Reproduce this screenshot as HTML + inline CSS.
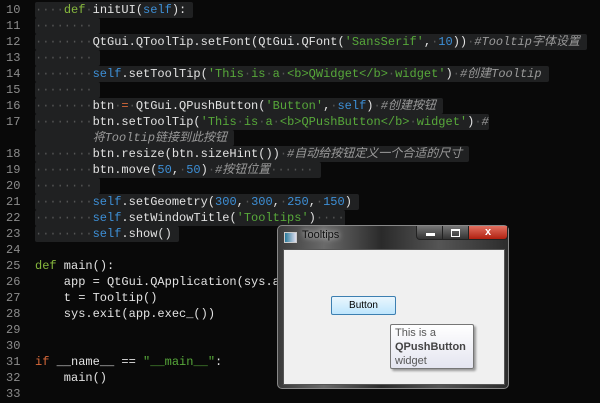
<!DOCTYPE html>
<html><head><meta charset="utf-8"><style>
body{margin:0;width:600px;height:403px;background:#090909;overflow:hidden;position:relative;font-family:"Liberation Mono","Noto Sans CJK SC",monospace;font-size:12px;color:#e2e2e2}
.ln{position:absolute;left:6px;width:26px;color:#8c8c8c;height:16px;line-height:16px}
.l{position:absolute;left:35px;height:16px;line-height:16px;white-space:pre}
.b{background:#202122;border-radius:2px}
.d{color:#555}
.k{color:#86b83d}.s{color:#3d8fd6}.g{color:#57a83a}.c{color:#9a9a9a;font-style:italic}.o{color:#d8693a}
.win{position:absolute;left:277px;top:225px;width:232px;height:164px;border-radius:5px;background:linear-gradient(90deg,#3a3a3a,#6a6a6a 20%,#2a2a2a 45%,#555 70%,#2c2c2c);border:1px solid #888;box-sizing:border-box}
</style></head><body>
<div class="ln" style="top:2px">10</div><div class="ln" style="top:18px">11</div><div class="ln" style="top:34px">12</div><div class="ln" style="top:50px">13</div><div class="ln" style="top:66px">14</div><div class="ln" style="top:82px">15</div><div class="ln" style="top:98px">16</div><div class="ln" style="top:114px">17</div><div class="ln" style="top:146px">18</div><div class="ln" style="top:162px">19</div><div class="ln" style="top:178px">20</div><div class="ln" style="top:194px">21</div><div class="ln" style="top:210px">22</div><div class="ln" style="top:226px">23</div><div class="ln" style="top:242px">24</div><div class="ln" style="top:258px">25</div><div class="ln" style="top:274px">26</div><div class="ln" style="top:290px">27</div><div class="ln" style="top:306px">28</div><div class="ln" style="top:322px">29</div><div class="ln" style="top:338px">30</div><div class="ln" style="top:354px">31</div><div class="ln" style="top:370px">32</div><div class="ln" style="top:386px">33</div>

<div class="l b" style="top:2px"><span class="d">····</span><span class="k">def</span><span class="d">·</span>initUI(<span class="s">self</span>): </div>
<div class="l b" style="top:18px"><span class="d">········</span> </div>
<div class="l b" style="top:34px"><span class="d">········</span>QtGui.QToolTip.setFont(QtGui.QFont(<span class="g">'SansSerif'</span>,<span class="d">·</span><span class="s">10</span>))<span class="d">·</span><span class="c">#Tooltip字体设置</span> </div>
<div class="l b" style="top:50px"><span class="d">········</span> </div>
<div class="l b" style="top:66px"><span class="d">········</span><span class="s">self</span>.setToolTip(<span class="g">'This<span class="d">·</span>is<span class="d">·</span>a<span class="d">·</span>&lt;b&gt;QWidget&lt;/b&gt;<span class="d">·</span>widget'</span>)<span class="d">·</span><span class="c">#创建Tooltip</span> </div>
<div class="l b" style="top:82px"><span class="d">········</span> </div>
<div class="l b" style="top:98px"><span class="d">········</span>btn<span class="d">·</span><span class="o">=</span><span class="d">·</span>QtGui.QPushButton(<span class="g">'Button'</span>,<span class="d">·</span><span class="s">self</span>)<span class="d">·</span><span class="c">#创建按钮</span> </div>
<div class="l b" style="top:114px"><span class="d">········</span>btn.setToolTip(<span class="g">'This<span class="d">·</span>is<span class="d">·</span>a<span class="d">·</span>&lt;b&gt;QPushButton&lt;/b&gt;<span class="d">·</span>widget'</span>)<span class="d">·</span><span class="c">#</span></div>
<div class="l b" style="top:130px">        <span class="c">将Tooltip链接到此按钮</span> </div>
<div class="l b" style="top:146px"><span class="d">········</span>btn.resize(btn.sizeHint())<span class="d">·</span><span class="c">#自动给按钮定义一个合适的尺寸</span> </div>
<div class="l b" style="top:162px"><span class="d">········</span>btn.move(<span class="s">50</span>,<span class="d">·</span><span class="s">50</span>)<span class="d">·</span><span class="c">#按钮位置</span><span class="d">······</span> </div>
<div class="l b" style="top:178px"><span class="d">········</span> </div>
<div class="l b" style="top:194px"><span class="d">········</span><span class="s">self</span>.setGeometry(<span class="s">300</span>,<span class="d">·</span><span class="s">300</span>,<span class="d">·</span><span class="s">250</span>,<span class="d">·</span><span class="s">150</span>) </div>
<div class="l b" style="top:210px"><span class="d">········</span><span class="s">self</span>.setWindowTitle(<span class="g">'Tooltips'</span>)<span class="d">····</span></div>
<div class="l b" style="top:226px"><span class="d">········</span><span class="s">self</span>.show() </div>
<div class="l" style="top:258px"><span class="k">def</span> main():</div>
<div class="l" style="top:274px">    app = QtGui.QApplication(sys.argv)</div>
<div class="l" style="top:290px">    t = Tooltip()</div>
<div class="l" style="top:306px">    sys.exit(app.exec_())</div>
<div class="l" style="top:354px"><span class="o">if</span> __name__ == <span class="g">"__main__"</span>:</div>
<div class="l" style="top:370px">    main()</div>

<div class="win">
 <div style="position:absolute;left:6px;top:6px;width:11px;height:9px;background:linear-gradient(90deg,#2a7a9a,#dde);border:1px solid #ccc"></div>
 <div style="position:absolute;left:24px;top:3px;font-family:'Liberation Sans',sans-serif;font-size:11px;color:#111;text-shadow:0 0 6px #fff">Tooltips</div>
 <div style="position:absolute;left:138px;top:0;width:26px;height:13px;background:linear-gradient(#777,#333);border:1px solid #222;border-top:none;border-radius:0 0 0 4px"><div style="margin:7px auto 0;width:9px;height:3px;background:#fff"></div></div>
 <div style="position:absolute;left:164px;top:0;width:25px;height:13px;background:linear-gradient(#777,#333);border:1px solid #222;border-top:none"><div style="margin:3px auto 0;width:7px;height:5px;border:1px solid #fff;border-top-width:2px"></div></div>
 <div style="position:absolute;left:190px;top:0;width:38px;height:13px;background:linear-gradient(#e27060,#b02010);border:1px solid #222;border-top:none;border-radius:0 0 4px 0;color:#fff;font:bold 11px 'Liberation Sans',sans-serif;text-align:center;line-height:13px">x</div>
 <div style="position:absolute;left:5px;top:23px;width:220px;height:134px;background:#f0f0f0;border:1px solid #555">
  <div style="position:absolute;left:47px;top:46px;width:63px;height:17px;border:1px solid #3c7fb1;border-radius:2px;background:linear-gradient(#eaf6fd,#bee6fd);font:10px 'Liberation Sans',sans-serif;text-align:center;line-height:17px;color:#000">Button</div>
  <div style="position:absolute;left:106px;top:74px;width:84px;height:45px;border:1px solid #767676;border-radius:2px;background:linear-gradient(#fff,#e4e5f0);box-shadow:2px 2px 2px #999;font:11px 'Liberation Sans',sans-serif;color:#575757;line-height:14px;padding:1px 4px;box-sizing:border-box">This is a<br><b style="color:#444">QPushButton</b><br>widget</div>
 </div>
</div>
</body></html>
